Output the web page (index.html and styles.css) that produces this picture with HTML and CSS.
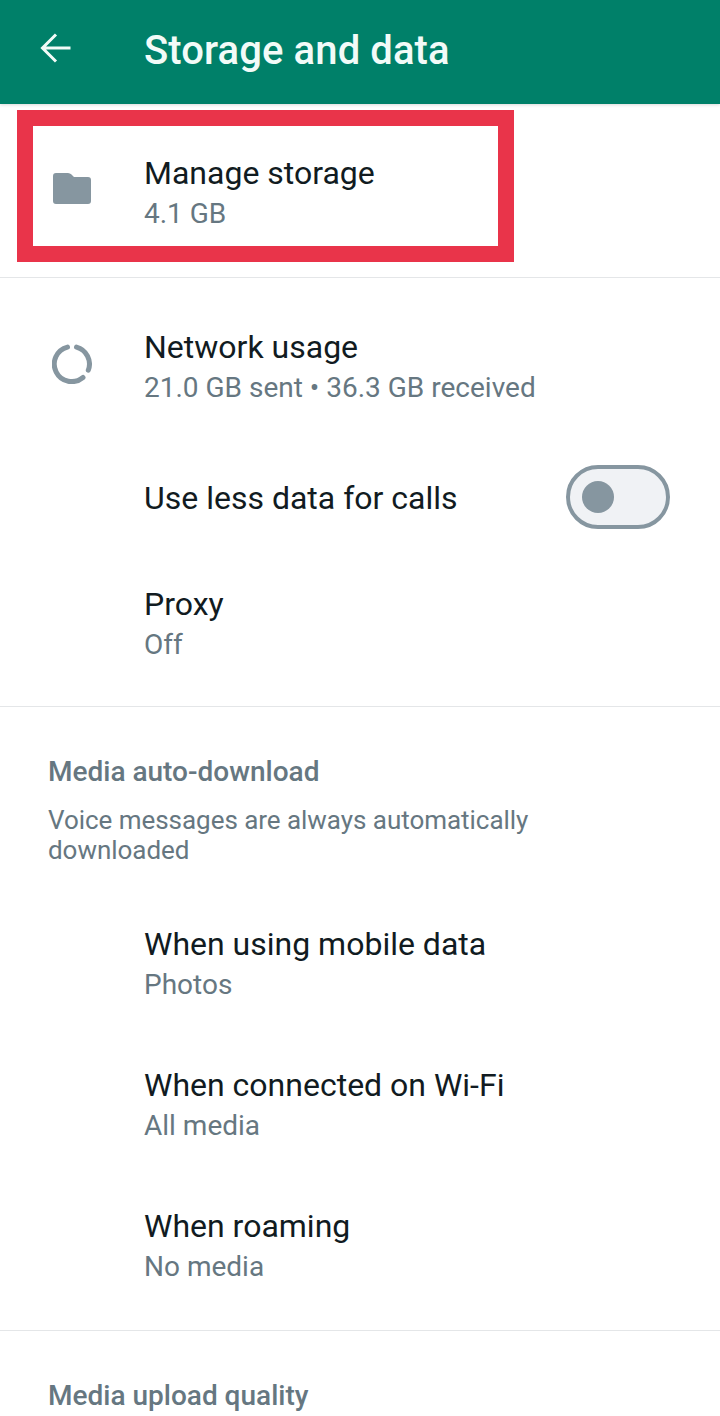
FILE: index.html
```html
<!DOCTYPE html>
<html lang="en">
<head>
    <meta charset="UTF-8">
    <meta name="viewport" content="width=device-width, initial-scale=1.0">
    <title>Storage and data</title>
    <link rel="stylesheet" href="styles.css">
</head>
<body>
    <header class="topbar">
        <svg class="back-icon" viewBox="0 0 32 32" width="32" height="32">
            <path d="M30.500 16H3M16 2.500L2.500 16L16 29.500" fill="none" stroke="#f2fbf8" stroke-width="3"/>
        </svg>
        <h1>Storage and data</h1>
    </header>

    <section class="group group-storage">
        <div class="highlight"></div>
        <div class="row">
            <svg class="row-icon folder" viewBox="0 0 38 32" width="38" height="32">
                <path d="M3 0H15Q17 0 18.500 1.500L21 4H35Q38 4 38 7V28Q38 31 35 31H3Q0 31 0 28V3Q0 0 3 0Z" fill="#8696a0"/>
            </svg>
            <div class="title">Manage storage</div>
            <div class="sub">4.1 GB</div>
        </div>
    </section>

    <section class="group group-network">
        <div class="row">
            <svg class="row-icon ring" viewBox="0 0 40 40" width="40" height="40">
                <g fill="none" stroke="#8696a0" stroke-width="5" stroke-linecap="round">
                    <path d="M24.500 3.100A17.500 17.500 0 0 1 36.300 26.200"/>
                    <path d="M31 33.500A17.500 17.500 0 1 1 15.500 3.100"/>
                </g>
            </svg>
            <div class="title">Network usage</div>
            <div class="sub">21.0 GB sent • 36.3 GB received</div>
        </div>
        <div class="row row-switch">
            <div class="title">Use less data for calls</div>
            <div class="switch"><span class="knob"></span></div>
        </div>
        <div class="row">
            <div class="title">Proxy</div>
            <div class="sub">Off</div>
        </div>
    </section>

    <section class="group group-media">
        <h2>Media auto-download</h2>
        <p class="note">Voice messages are always automatically downloaded</p>
        <div class="row">
            <div class="title">When using mobile data</div>
            <div class="sub">Photos</div>
        </div>
        <div class="row">
            <div class="title">When connected on Wi-Fi</div>
            <div class="sub">All media</div>
        </div>
        <div class="row">
            <div class="title">When roaming</div>
            <div class="sub">No media</div>
        </div>
    </section>

    <section class="group group-upload">
        <h2>Media upload quality</h2>
    </section>
</body>
</html>
```

FILE: styles.css
```css
html, body {
    height: 100%;
}

body {
    margin: 0;
    background: #fff;
    font-family: Roboto, "Liberation Sans", sans-serif;
    color: #111b21;
    overflow: hidden;
}

.topbar {
    height: 104px;
    background: #008069;
    display: flex;
    align-items: center;
    box-shadow: 0 1px 3px rgba(0, 0, 0, 0.15);
}

.back-icon {
    margin-left: 40px;
    margin-top: -8px;
}

.topbar h1 {
    margin: -4px 0 0 72px;
    font-size: 40px;
    font-weight: 500;
    letter-spacing: 0.1px;
    color: #f2fbf8;
}

.group {
    position: relative;
    border-bottom: 1px solid #e4e6e8;
}

.group-storage {
    height: 173px;
}

.group-network {
    height: 429px;
    padding-top: 19px;
    box-sizing: border-box;
}

.group-media {
    height: 624px;
    box-sizing: border-box;
    padding-top: 48px;
}

.group-upload {
    border-bottom: none;
    padding-top: 48px;
}

.highlight {
    position: absolute;
    left: 17px;
    top: 6px;
    width: 497px;
    height: 152px;
    box-sizing: border-box;
    border: 16px solid #e9344a;
}

.row {
    position: relative;
    height: 141px;
    box-sizing: border-box;
    padding: 30px 0 0 144px;
}

.group-storage .row {
    height: 173px;
    padding-top: 49px;
}

.row-switch {
    height: 116px;
    padding-top: 40px;
    display: flex;
    justify-content: space-between;
    padding-right: 50px;
}

.row-icon {
    position: absolute;
}

.folder {
    left: 53px;
    top: 69px;
}

.ring {
    left: 52px;
    top: 47px;
}

.title {
    font-size: 32px;
    line-height: 40px;
}

.sub {
    font-size: 28px;
    line-height: 41px;
    color: #667781;
}

.switch {
    width: 104px;
    height: 64px;
    margin-top: -13px;
    box-sizing: border-box;
    border: 4px solid #8696a0;
    border-radius: 32px;
    background: #f0f2f5;
    display: flex;
    align-items: center;
    padding-left: 12px;
}

.knob {
    width: 32px;
    height: 32px;
    border-radius: 50%;
    background: #8696a0;
}

h2 {
    margin: 0 0 0 48px;
    font-size: 28px;
    line-height: 34px;
    font-weight: 500;
    color: #667781;
}

.note {
    margin: 16px 48px 0;
    font-size: 26px;
    line-height: 30px;
    letter-spacing: -0.04px;
    color: #667781;
    width: 520px;
}

.group-media .row {
    padding-top: 29px;
}

.group-media .row:first-of-type {
    margin-top: 30px;
}
```
